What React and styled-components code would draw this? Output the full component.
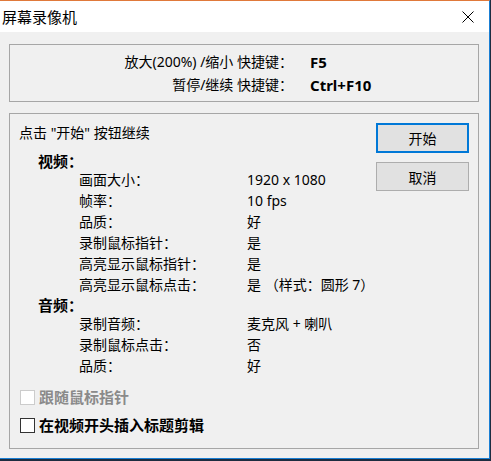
import React from "react";
import styled, { createGlobalStyle } from "styled-components";

const GlobalStyle = createGlobalStyle`
  html, body {
    margin: 0;
    padding: 0;
    background: #1d2c40;
  }
  body {
    font-family: "Noto Sans", "Noto Sans CJK SC", sans-serif;
    font-size: 14px;
    color: #000;
  }
`;

const Window = styled.div`
  width: 489px;
  border-top: 1px solid #e0793a;
  border-right: 1px solid #1a7fd4;
  border-bottom: 1px solid #1a7fd4;
  background: #f0f0f0;
`;

const TitleBar = styled.div`
  height: 31px;
  background: #fff;
  display: flex;
  align-items: center;
  justify-content: space-between;
  padding: 0 15px 0 2px;
`;

const Title = styled.div`
  font-family: "Noto Sans CJK SC", sans-serif;
  font-size: 15px;
  margin-top: -1px;
`;

const Body = styled.div`
  padding: 12px 10px 9px 9px;
`;

const GroupBox = styled.div`
  border: 1px solid #a6a6a6;
  margin-top: ${({ gap }) => gap || 0}px;
`;

const ShortcutGrid = styled.div`
  display: grid;
  grid-template-columns: 283px auto;
  column-gap: 17px;
  row-gap: 3px;
  padding: 7px 0 6px;
  line-height: 20px;
`;

const KeyLabel = styled.div`
  text-align: right;
`;

const KeyValue = styled.div`
  font-weight: bold;
  font-size: 15px;
`;

const Main = styled.div`
  display: flex;
  padding: 9px 9px 13px 9px;
`;

const Left = styled.div`
  flex: 1;
`;

const Intro = styled.div`
  line-height: 20px;
`;

const Heading = styled.div`
  font-weight: bold;
  font-size: 15px;
  line-height: 16px;
  padding-left: 19px;
  margin-top: ${({ gap }) => gap}px;
`;

const Row = styled.div`
  display: grid;
  grid-template-columns: 168px auto;
  padding-left: 60px;
  line-height: 21px;
`;

const Buttons = styled.div`
  display: flex;
  flex-direction: column;
  gap: 9px;
`;

const Button = styled.button`
  width: 93px;
  height: ${({ primary }) => (primary ? 30 : 29)}px;
  box-sizing: border-box;
  background: #e1e1e1;
  border: ${({ primary }) =>
    primary ? "2px solid #0078d7" : "1px solid #adadad"};
  font-family: "Noto Sans CJK SC", sans-serif;
  font-size: 14px;
  color: #000;
  padding: 0;
`;

const Check = styled.label`
  display: flex;
  align-items: center;
  gap: 4px;
  line-height: 20px;
  padding-left: 1px;
  margin-top: ${({ gap }) => gap}px;
  font-weight: bold;
  font-size: 15px;
  color: ${({ disabled }) => (disabled ? "#8a8a8a" : "#000")};
`;

const Box = styled.span`
  width: 15px;
  height: 15px;
  box-sizing: border-box;
  background: #fff;
  border: 1px solid ${({ disabled }) => (disabled ? "#cccccc" : "#333")};
`;

const video = [
  ["画面大小：", "1920 x 1080"],
  ["帧率：", "10 fps"],
  ["品质：", "好"],
  ["录制鼠标指针：", "是"],
  ["高亮显示鼠标指针：", "是"],
  ["高亮显示鼠标点击：", "是 （样式：圆形 7）"],
];

const audio = [
  ["录制音频：", "麦克风 + 喇叭"],
  ["录制鼠标点击：", "否"],
  ["品质：", "好"],
];

export default function App() {
  return (
    <>
      <GlobalStyle />
      <Window>
        <TitleBar>
          <Title>屏幕录像机</Title>
          <svg width="12" height="12" viewBox="0 0 12 12">
            <path d="M0.5 0.5L11.5 11.5M11.5 0.5L0.5 11.5" stroke="#000" strokeWidth="1" />
          </svg>
        </TitleBar>
        <Body>
          <GroupBox>
            <ShortcutGrid>
              <KeyLabel>放大(200%) /缩小 快捷键：</KeyLabel>
              <KeyValue>F5</KeyValue>
              <KeyLabel>暂停/继续 快捷键：</KeyLabel>
              <KeyValue>Ctrl+F10</KeyValue>
            </ShortcutGrid>
          </GroupBox>
          <GroupBox gap={11}>
            <Main>
              <Left>
                <Intro>点击 "开始" 按钮继续</Intro>
                <Heading gap={10}>视频：</Heading>
                {video.map(([k, v]) => (
                  <Row key={k}>
                    <span>{k}</span>
                    <span>{v}</span>
                  </Row>
                ))}
                <Heading gap={2}>音频：</Heading>
                {audio.map(([k, v]) => (
                  <Row key={k + v}>
                    <span>{k}</span>
                    <span>{v}</span>
                  </Row>
                ))}
                <Check gap={11} disabled>
                  <Box disabled />
                  跟随鼠标指针
                </Check>
                <Check gap={8}>
                  <Box />
                  在视频开头插入标题剪辑
                </Check>
              </Left>
              <Buttons>
                <Button primary>开始</Button>
                <Button>取消</Button>
              </Buttons>
            </Main>
          </GroupBox>
        </Body>
      </Window>
    </>
  );
}
